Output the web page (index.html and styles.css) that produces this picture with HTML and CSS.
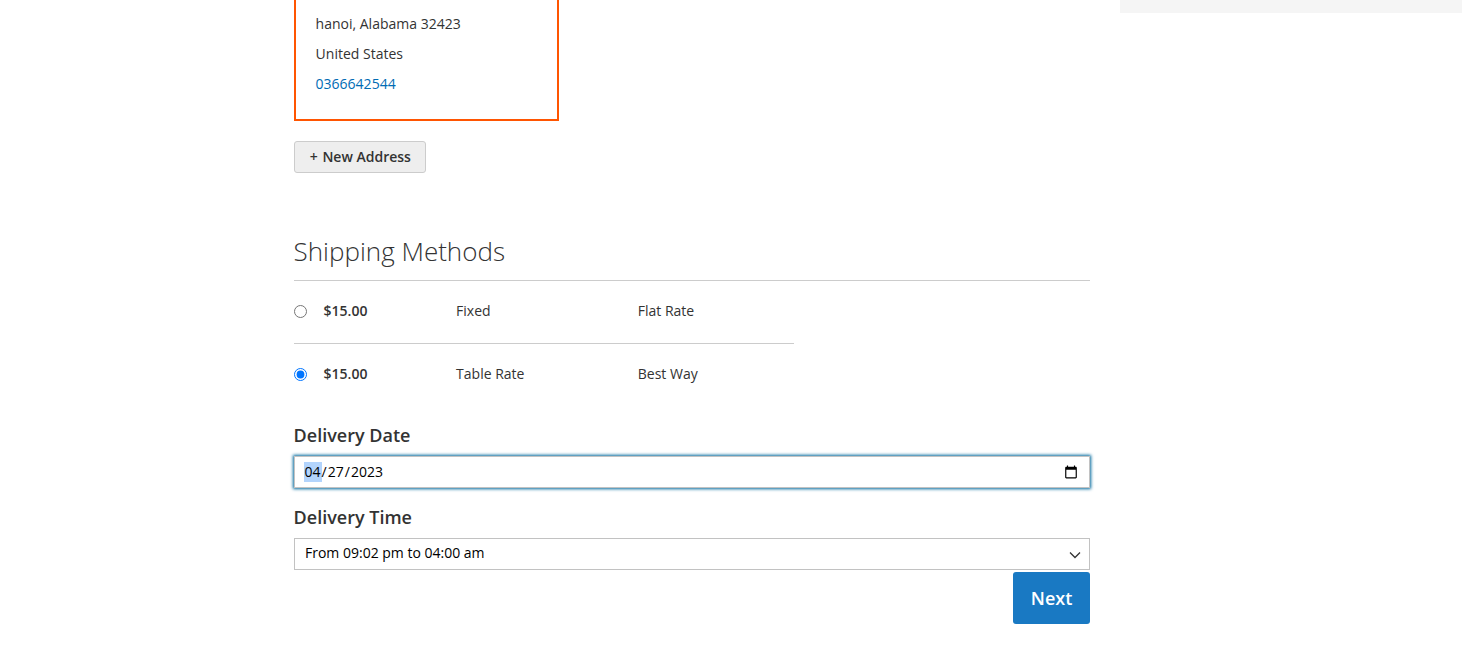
FILE: index.html
```
<!DOCTYPE html>
<html lang="en">
<head>
<meta charset="utf-8">
<title>Checkout</title>
<link rel="stylesheet" href="styles.css">
</head>
<body>
<div class="page">
  <main class="checkout">
    <address class="address-card">
      <span>hanoi, Alabama 32423</span>
      <span>United States</span>
      <a href="#">0366642544</a>
    </address>
    <button class="new-address" type="button"><span class="plus">+</span> New Address</button>
    <h2 class="step-title">Shipping Methods</h2>
    <div class="methods">
      <label class="method"><input type="radio" name="method"><b>$15.00</b><span>Fixed</span><span>Flat Rate</span></label>
      <label class="method"><input type="radio" name="method" checked><b>$15.00</b><span>Table Rate</span><span>Best Way</span></label>
    </div>
    <div class="label">Delivery Date</div>
    <div class="control date">
      <span class="date-value"><span class="part selected">04</span>/<span class="part">27</span>/<span class="part">2023</span></span>
      <svg class="calendar" viewBox="0 0 24 24"><path d="M20 3h-1V1h-2v2H7V1H5v2H4c-1.100 0-2 .9-2 2v16c0 1.100.9 2 2 2h16c1.100 0 2-.9 2-2V5c0-1.100-.9-2-2-2zm0 18H4V8h16v13z"/></svg>
    </div>
    <div class="label label-time">Delivery Time</div>
    <div class="control time">
      <span>From 09:02 pm to 04:00 am</span>
      <svg class="chevron" viewBox="0 0 12 8"><path d="M1 1.500l5 5 5-5"/></svg>
    </div>
    <button class="next" type="button">Next</button>
  </main>
  <aside class="summary"></aside>
</div>
</body>
</html>
```
FILE: styles.css
```
* { box-sizing: border-box; }
body {
  margin: 0;
  background: #fff;
  color: #333;
  font: 14px/20px "Open Sans", sans-serif;
}
.page {
  display: flex;
  height: 652px;
  overflow: hidden;
  padding-left: 293.6px;
}
.checkout {
  display: flex;
  flex-direction: column;
  align-items: flex-start;
  width: 796px;
  margin-right: 30px;
}
.summary { flex: 1; height: 13px; background: #f5f5f5; }
.address-card {
  display: flex;
  flex-direction: column;
  width: 265px;
  height: 121px;
  padding: 9px 20px 0;
  border: 2px solid #ff5501;
  border-top: 0;
  font-style: normal;
  line-height: 30px;
}
.address-card a { color: #006bb4; text-decoration: none; }
.new-address {
  width: 132px;
  height: 32px;
  margin-top: 20px;
  padding: 0 0 0 1.500px;
  border: 1px solid #ccc;
  border-radius: 3px;
  background: #eee;
  color: #333;
  font: 600 14px/16px "Open Sans", sans-serif;
}
.plus { margin-right: 1px; }
.step-title {
  width: 100%;
  height: 48px;
  margin: 60px 0 0;
  border-bottom: 1px solid #ccc;
  font-size: 26px;
  font-weight: 300;
  line-height: 37px;
}
.methods { width: 500px; }
.method {
  display: grid;
  grid-template-columns: 30px 132.500px 181.700px 1fr;
  height: 62px;
  padding-top: 20px;
}
.method + .method { height: 63px; border-top: 1px solid #ccc; }
.method input { width: 13px; height: 13px; margin: 4px 0 0; }
.method b { font-weight: 600; }
.label {
  margin-top: 18px;
  font-size: 18px;
  font-weight: 600;
  line-height: 22px;
}
.control {
  display: flex;
  align-items: center;
  justify-content: space-between;
  width: 100%;
  height: 32px;
  padding: 0 10px;
  border: 1px solid #c2c2c2;
  color: #000;
}
.date { margin-top: 10px; padding-left: 9px; box-shadow: 0 0 3px 1px #00699d; }
.date-value { display: flex; }
.part { padding: 0 1px; }
.selected { background: #b3d4fc; }
.calendar { width: 14px; height: 14px; margin-right: 1px; }
.label-time { margin-top: 18px; }
.time { margin-top: 10px; padding-bottom: 2px; padding-left: 10.400px; }
.chevron {
  width: 12px;
  height: 8px;
  margin: 4px -2px 0 0;
  fill: none;
  stroke: #333;
  stroke-width: 1.3;
}
.next {
  align-self: flex-end;
  width: 77px;
  height: 52px;
  margin-top: 2px;
  padding: 0 0 0 1px;
  border: 0;
  border-radius: 3px;
  background: #1979c3;
  color: #fff;
  font: 600 18px/22px "Open Sans", sans-serif;
}
```
